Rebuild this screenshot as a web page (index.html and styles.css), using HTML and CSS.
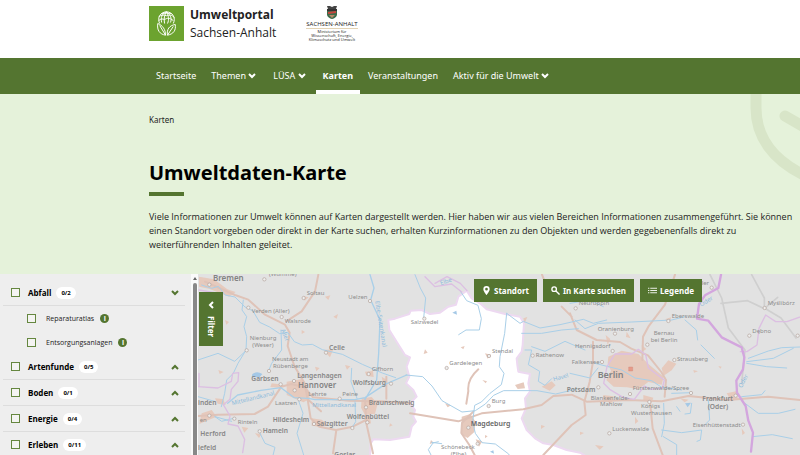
FILE: index.html
```
<!DOCTYPE html>
<html lang="de">
<head>
    <title>Umweltdaten-Karte</title>
    <meta charset="UTF-8">
    <link rel="stylesheet" href="styles.css">
</head>
<body>
    <header class="header">
        <a class="brand" href="#">
            <svg class="brand-logo" viewBox="0 0 36 36" fill="none" stroke="#fff" stroke-width="1">
                <rect width="36" height="36" fill="#6ca32f" stroke="none"/>
                <path d="M11 18C8 12 12 6 18 6s10 6 7 12M10 15c2-2 4-2 6-1 3-2 5-2 9 1M10 11c3-2 5-2 8-1 3-1 6-1 8 2M13 8c3-1 7-1 10 0M13 17c-1-5 0-9 5-11 4 3 6 7 4 11M16 18c-1-5 0-9 2-12 2 4 3 8 1 12" />
                <path d="M17 30c0-6-3-10-8-12-1 7 2 11 8 12zM19 30c-1-6 2-10 8-11 1 6-2 10-8 11zM11 20l6 10M25 21l-6 9"/>
            </svg>
            <span class="brand-name"><b>Umweltportal</b><br>Sachsen-Anhalt</span>
        </a>
        <div class="ministry">
            <svg class="crest" viewBox="0 0 12 13">
                <path d="M1 0h3l2 1 2-1h3l-1 3H2z" fill="#444"/>
                <path d="M1 3h10v6q-1 3-5 4-4-1-5-4z" fill="#3c6b4a"/>
                <path d="M1 3h10v2H1z" fill="#333"/>
                <path d="M2 6l8-1v2L2 8z" fill="#c8443c"/>
                <path d="M3 9h6l-3 3z" fill="#b98a68"/>
            </svg>
            <span class="ministry-land">SACHSEN-ANHALT</span>
            <span class="ministry-name">Ministerium für<br>Wissenschaft, Energie,<br>Klimaschutz und Umwelt</span>
        </div>
    </header>

    <nav class="nav">
        <a class="nav-item" href="#">Startseite</a>
        <button class="nav-item nav-drop" type="button">Themen <svg class="chevron" viewBox="0 0 8 6"><path d="M1 1l3 3 3-3"/></svg></button>
        <button class="nav-item nav-drop" type="button">LÜSA <svg class="chevron" viewBox="0 0 8 6"><path d="M1 1l3 3 3-3"/></svg></button>
        <a class="nav-item active" href="#">Karten</a>
        <a class="nav-item" href="#">Veranstaltungen</a>
        <button class="nav-item nav-drop" type="button">Aktiv für die Umwelt <svg class="chevron" viewBox="0 0 8 6"><path d="M1 1l3 3 3-3"/></svg></button>
    </nav>

    <section class="hero">
        <svg class="hero-leaf" viewBox="0 0 50 90">
            <path d="M6 -2V14C6 42 22 66 56 82M35 22L56 34"/>
        </svg>
        <div class="breadcrumb">Karten</div>
        <h1>Umweltdaten-Karte</h1>
        <p>Viele Informationen zur Umwelt können auf Karten dargestellt werden. Hier haben wir aus vielen Bereichen Informationen zusammengeführt. Sie können einen Standort vorgeben oder direkt in der Karte suchen, erhalten Kurzinformationen zu den Objekten und werden gegebenenfalls direkt zu weiterführenden Inhalten geleitet.</p>
    </section>

    <main class="map-section">
        <aside class="filter">
            <div class="filter-list">
                <div class="group">
                    <input type="checkbox" id="abfall"><label for="abfall">Abfall</label><span class="count">0/2</span>
                    <button class="toggle" type="button" aria-label="Abfall"><svg class="chevron" viewBox="0 0 8 6"><path d="M1 1l3 3 3-3"/></svg></button>
                </div>
                <div class="layer">
                    <input type="checkbox" id="reparatur"><label for="reparatur">Reparaturatlas</label><span class="info">i</span>
                </div>
                <div class="layer">
                    <input type="checkbox" id="entsorgung"><label for="entsorgung">Entsorgungsanlagen</label><span class="info">i</span>
                </div>
                <div class="group">
                    <input type="checkbox" id="arten"><label for="arten">Artenfunde</label><span class="count">0/5</span>
                    <button class="toggle" type="button" aria-label="Artenfunde"><svg class="chevron" viewBox="0 0 8 6"><path d="M1 5l3-3 3 3"/></svg></button>
                </div>
                <div class="group">
                    <input type="checkbox" id="boden"><label for="boden">Boden</label><span class="count">0/1</span>
                    <button class="toggle" type="button" aria-label="Boden"><svg class="chevron" viewBox="0 0 8 6"><path d="M1 5l3-3 3 3"/></svg></button>
                </div>
                <div class="group">
                    <input type="checkbox" id="energie"><label for="energie">Energie</label><span class="count">0/4</span>
                    <button class="toggle" type="button" aria-label="Energie"><svg class="chevron" viewBox="0 0 8 6"><path d="M1 5l3-3 3 3"/></svg></button>
                </div>
                <div class="group">
                    <input type="checkbox" id="erleben"><label for="erleben">Erleben</label><span class="count">0/11</span>
                    <button class="toggle" type="button" aria-label="Erleben"><svg class="chevron" viewBox="0 0 8 6"><path d="M1 5l3-3 3 3"/></svg></button>
                </div>
            </div>
            <div class="scrollbar"><i class="scroll-arrow"></i><i class="scroll-thumb"></i></div>
        </aside>

        <div class="map">
            <svg class="map-canvas" viewBox="9 12 1806 543" preserveAspectRatio="xMinYMin slice">
                <!-- Sachsen-Anhalt -->
                <path class="land" d="M815 62L790 80 783 104 760 110 735 128 705 132 680 120 647 122 643 132 600 146 580 150 583 180 605 215 630 255 645 262 635 290 643 320 633 340 655 360 665 380 645 400 660 420 655 440 663 455 650 470 643 500 585 510 535 508 527 520 525 560H1175L1155 548 1115 540 1075 525 1045 520 1020 505 995 480 980 445 993 415 990 385 1005 365 1000 340 1005 312 970 305 967 285 965 265 980 245 983 225 985 190 987 160 975 140 930 132 875 118 855 100 830 85z"/>

                <g class="urban">
                    <path d="M12 20l45 8 40 30 25 8-20 14-60-24-30-6zM275 335l45-8 15 20 10 40-20 10-50-22zM20 430l30-10 15 20-30 12-22 10zM500 385l30-4 18 20-8 30-30 4-12-22zM350 445l30 4 16 14-16 8-30-4zM230 340l40 5-14 8-30-2zM60 385l24 2 8 18-24-4zM506 440l18-4 4 24-14 4zM325 78l16 4-12 10zM90 150l12 6-8 8zM385 240l30-2-10 24zM390 80l16-4-6 14zM415 140l14-8-4 14zM360 290l14 4-10 10zM510 305l24-2 2 18-22-4zM140 470l20 4-12 14zM70 300l16 6-12 6zM450 285l16 4-10 10zM320 180l10 6-10 6zM180 490l20 2-8 12zM560 320l16 10-12 8z"/>
                    <path d="M800 440l26-8 16 24-4 30-20 18-18-10zM690 238l8 10-12 4zM797 232l12-4-4 10zM870 250l18 4-10 12zM862 330l14 4-4 6zM960 345l26-8 4 18-22 2zM750 400l18 6-10 6zM708 510l8 8-12 4zM985 145l12-4-8 18zM1040 350l30-16 12 12-18 16zM1038 465l12 4-12 8zM870 495l8 4-8 6zM842 508l20 6-10 16zM585 460l8 6-10 4z"/>
                    <path d="M1240 260l40-18 50 10 30 30 46 38-6 24-40-8-30 22-34-6-40-2-22-20 14-28-10-22zM1400 295l20-24 24 10-14 20-24 16zM1225 375l30 4-6 22-24-14zM1345 375l30 8-6 16-24-8zM1595 370l28-6 6 22-20 8zM1410 148l18-6-2 14zM1495 300l14 4-12 4zM1570 288l10 2-4 6zM1200 525l26 4-12 10zM1320 440l10 14-10 8zM1155 485l12 4-12 6zM1295 185l12 20-14-4zM1340 225l14 12-12 8zM1455 385l26 4-12 8zM1640 475l10 14-8 6zM1232 195l14 12-8 18z"/>
                </g>

                <g class="road">
                    <path d="M30 35l90 40 40 14 50 45 60 30 14 24-6 40 20 60 30 50 10 50 40 36M370 14l-10 50-40 60-46 30M9 438l60-4 110-2 40-22 40-60 30-8 40 10 25 30 110 10 92 2 90 6M510 390l4 70 20 90M574 320v66M335 370l12 75 26 25 50 10 50-10 40-20M424 480l-10 70"/>
                    <path d="M645 430L790 454 832 440 860 430 985 418 1040 405 1075 378 1130 374 1175 395 1300 390 1400 394 1480 378 1600 390 1720 380 1815 390"/>
                    <path d="M850 298q-34 30-30 65l-6 38M835 425l-34 34-2 30 24 36 16 30M1125 130l20 50 60 30 70 6 34 20 50 20 40 50 14 24-4 50M1440 14l-30 90-50 66-16 30-2 70M1365 395l8 80 30 80M1045 555l85-90 42-30-4-40 16-60 10-60 0-60M1100 110l30 30M1041 14l8 20"/>
                </g>
                <path class="road-grey" d="M1545 14l35 70 20 90 30 40 20 26M1578 100l80-8 50 24 40-34M1670 14l38 70 0 30 50 30 45 60M1650 240l-10 100"/>

                <g class="river">
                    <path d="M20 45l30 10 20-6 20 26 30 6 30 30 24 12 20 34 30 14 30 20 24-4 20 28 24 10 30-2 30 16 60 14 60 30 60 26 40 14M145 90l-4 30 14 20-8 30 8 30-2 40-24 40-14 30-20 20-6 40-10 40M258 180l2 60-30 40-8 20M9 270l60-20 50 24 36-34M470 295l-2 40 18 50M190 480l20 40 30 12-6 24M310 390l14 40-18 60 20 65M480 395l2 60-12 20M60 440l50 14M60 440l20 14 40-10M9 380l50 14"/>
                    <path d="M660 14l16 40 16 30-6 60M795 62l20 30 34 14 10 40-6 34-40 0-22 14M935 130l-6 60-14 70-2 30 14 20-8 34-34 26-26 26-20 10-6 50 8 34 20 28 40 4 40 30 10 20M935 130l40 30 10-6 50 20 60-10 70-16 30 12 40-10M990 240h20l-10 44 34 20-4 30 20 12 20-20M980 190l60 0 60-10 50-4M1010 230l40 14 60-30 60 26M730 515l-16 4-14 20 10 20M710 517l30 4M633 315l50 5 28 28 30 44 60 34 40-4 30-20 25-26 30-14 100 0 56 10 60-14"/>
                </g>
                <g class="canal">
                    <path d="M525 14l12 40-10 36 28 60-4 100-6 80-35 58M98 400l30-25 70-14 60-8 40 30 40 2M340 385l20 4h120l30-6 60-40 65-28"/>
                </g>
                <g class="river">
                    <path d="M1140 150l30 26 40-16 100-4 120-6 40-10M1125 310l60 14 24-30M1240 290l40 10 40 24 50 8 30 20 60 8M1240 290l-40-10M1430 370l60-2M1470 150l34 30 4 30M1518 225l40 40M1660 265l60-22 40-10 55-2M1655 275l80-10 60-30M1655 280l60 10 60 4M1640 380l60-6 10-12M1650 400l40 30 60 0 50-12M1672 500l60-6 60 12M1400 480l60 8 60-8-4 30-10 4M1540 390l4 60-14 14M1405 500l40 24 0 31M1406 400l2 60-8 40M1125 100l60-10 40 20M1445 410l10 14M1490 400l-4 30-16 2"/>
                </g>

                <path class="border" d="M9 350l60 4 40-20 4-24 18-2-2 26-20 24-4 30-20 16 20 34-6 24 30 6 20 40-6 40M12 350v-40M12 60l60 10M800 66l-30-24-50 8-30-30M720 40l36-20 40 20 20 22"/>
                <path class="border" d="M1226 340l10-50 24-38 50 0 20-14 22 16 8 40 48 36-6 24-34 4-20-10-30 40-34-6-40-24zM1636 245l20 0 30-20 6-50 20-40 30 20 34 0 55-20"/>
                <path class="oder" d="M1578 14l-8 40-40 22-18 26-6 44 34 6 40 50 60 30 8 30-4 36-20 34 2 36 26 40 8 44 14 36-6 57"/>

                <g class="lake">
                    <path d="M172 312q14-10 30 0l-8 10-24 0zM772 128l12-6 2 12zM885 545l10-4 2 10zM1470 400l18-2-10 14z"/>
                </g>

                <g class="town-dot">
                    <circle cx="43" cy="44" r="5"/><circle cx="208" cy="28" r="5"/><circle cx="326" cy="84" r="5"/><circle cx="160" cy="113" r="5"/><circle cx="260" cy="141" r="5"/><circle cx="525" cy="93" r="5"/><circle cx="155" cy="241" r="5"/><circle cx="393" cy="248" r="5"/><circle cx="222" cy="303" r="5"/><circle cx="521" cy="312" r="5"/><circle cx="257" cy="343" r="5"/><circle cx="297" cy="333" r="5"/><circle cx="299" cy="361" r="5"/><circle cx="588" cy="341" r="5"/><circle cx="434" cy="386" r="5"/><circle cx="313" cy="388" r="5"/><circle cx="513" cy="412" r="5"/><circle cx="43" cy="437" r="5"/><circle cx="118" cy="446" r="5"/><circle cx="194" cy="484" r="5"/><circle cx="357" cy="462" r="5"/><circle cx="472" cy="474" r="5"/><circle cx="517" cy="457" r="5"/>
                    <circle cx="688" cy="146" r="5"/><circle cx="882" cy="258" r="5"/><circle cx="755" cy="294" r="5"/><circle cx="881" cy="408" r="5"/><circle cx="820" cy="473" r="5"/><circle cx="848" cy="521" r="5"/><circle cx="1013" cy="257" r="5"/>
                    <circle cx="1142" cy="115" r="5"/><circle cx="1420" cy="153" r="5"/><circle cx="1260" cy="191" r="5"/><circle cx="1357" cy="224" r="5"/><circle cx="1253" cy="243" r="5"/><circle cx="1221" cy="276" r="5"/><circle cx="1438" cy="270" r="5"/><circle cx="1210" cy="352" r="5"/><circle cx="1305" cy="372" r="5"/><circle cx="1363" cy="396" r="5"/><circle cx="1488" cy="369" r="5"/><circle cx="1622" cy="377" r="5"/><circle cx="1644" cy="464" r="5"/><circle cx="1243" cy="490" r="5"/><circle cx="1550" cy="53" r="5"/><circle cx="1709" cy="114" r="5"/><circle cx="1663" cy="197" r="5"/><circle cx="1808" cy="197" r="5"/>
                </g>
                <path d="M1301 291h12v12h-12z" fill="#e79b89" stroke="#c98476"/>

                <g class="water-name">
                    <text transform="translate(112 406) rotate(-14)">Mittellandkanal</text>
                    <text x="352" y="411">Mittellandkanal</text>
                    <text transform="translate(541 94) rotate(81)">Elbe-Seitenkanal</text>
                    <text transform="translate(257 180) rotate(66)">Aller</text>
                    <text transform="translate(1076 334) rotate(-16)">Havel</text>
                    <text transform="translate(1519 110) rotate(-32)">Oder</text>
                    <text transform="translate(1640 355) rotate(-62)">Oder</text>
                    <text transform="translate(738 46) rotate(-20)">Elbe</text>
                </g>
                <g class="town">
                    <text x="222" y="19">(Wümme)</text>
                    <text x="335" y="76">Soltau</text>
                    <text x="460" y="86">Uelzen</text>
                    <text x="170" y="130">Verden (Aller)</text>
                    <text x="269" y="159">Walsrode</text>
                    <text x="164" y="211">Nienburg</text>
                    <text x="172" y="232">(Weser)</text>
                    <text x="231" y="272">Neustadt am</text>
                    <text x="234" y="294">Rübenberge</text>
                    <text x="530" y="304">Gifhorn</text>
                    <text x="340" y="379">Lehrte</text>
                    <text x="442" y="377">Peine</text>
                    <text x="240" y="406">Laatzen</text>
                    <text x="128" y="463">Rinteln</text>
                    <text x="14" y="456">en</text>
                    <text x="647" y="162">Salzwedel</text>
                    <text x="891" y="249">Stendal</text>
                    <text x="763" y="286">Gardelegen</text>
                    <text x="890" y="400">Burg</text>
                    <text x="738" y="538">Schönebeck</text>
                    <text x="767" y="559">(Elbe)</text>
                    <text x="1022" y="262">Rathenow</text>
                    <text x="1151" y="105">Neuruppin</text>
                    <text x="1430" y="145">Eberswalde</text>
                    <text x="1208" y="182">Oranienburg</text>
                    <text x="1376" y="194">Bernau</text>
                    <text x="1367" y="216">bei Berlin</text>
                    <text x="1140" y="234">Hennigsdorf</text>
                    <text x="1130" y="281">Falkensee</text>
                    <text x="1446" y="274">Strausberg</text>
                    <text x="1313" y="361">Fürstenwalde/Spree</text>
                    <text x="1187" y="389">Blankenfelde-</text>
                    <text x="1215" y="409">Mahlow</text>
                    <text x="1338" y="413">Königs</text>
                    <text x="1308" y="435">Wusterhausen</text>
                    <text x="1252" y="482">Luckenwalde</text>
                    <text x="1493" y="470">Eisenhüttenstadt</text>
                    <text x="1718" y="105">Myślibórz</text>
                    <text x="1672" y="189">Dębno</text>
                    <text x="1520" y="45">ler</text>
                </g>
                <g class="city">
                    <text x="402" y="239">Celle</text>
                    <text x="307" y="324">Langenhagen</text>
                    <text x="169" y="334">Garbsen</text>
                    <text x="473" y="346">Wolfsburg</text>
                    <text x="9" y="406">inden</text>
                    <text x="521" y="406">Braunschweig</text>
                    <text x="455" y="448">Wolfenbüttel</text>
                    <text x="233" y="456">Hildesheim</text>
                    <text x="365" y="467">Salzgitter</text>
                    <text x="203" y="489">Hameln</text>
                    <text x="16" y="497">Herford</text>
                    <text x="9" y="541">lefeld</text>
                    <text x="418" y="562">Goslar</text>
                    <text x="1115" y="366">Potsdam</text>
                    <text x="1522" y="392">Frankfurt</text>
                    <text x="1538" y="416">(Oder)</text>
                </g>
                <g class="metro">
                    <text x="54" y="34">Bremen</text>
                    <text x="309" y="353">Hannover</text>
                    <text class="dark" x="827" y="469">Magdeburg</text>
                    <text class="capital" x="1208" y="325">Berlin</text>
                </g>
            </svg>

            <button class="filter-tab" type="button">
                <svg class="chevron" viewBox="0 0 8 6"><path d="M1 1l3 3 3-3"/></svg>
                Filter
            </button>
            <div class="map-tools">
                <button class="map-button" type="button">
                    <svg class="icon" viewBox="0 0 20 20"><path d="M10 0a7 7 0 0 0-7 7C3 12 10 20 10 20s7-8 7-13A7 7 0 0 0 10 0zm0 4a3 3 0 1 1 0 6 3 3 0 0 1 0-6z" fill="#fff"/></svg>
                    Standort
                </button>
                <button class="map-button" type="button">
                    <svg class="icon" viewBox="0 0 20 20" fill="none" stroke="#fff" stroke-width="3"><circle cx="7" cy="7" r="5"/><path d="M11 11l8 8"/></svg>
                    In Karte suchen
                </button>
                <button class="map-button" type="button">
                    <svg class="icon" viewBox="0 0 20 20" stroke="#fff" stroke-width="2"><path d="M0 5h3M5 5h15M0 10h3M5 10h15M0 15h3M5 15h15"/></svg>
                    Legende
                </button>
            </div>
        </div>
    </main>
</body>
</html>
```
FILE: styles.css
```
* {
    box-sizing: border-box;
}
body {
    margin: 0;
    height: 100vh;
    display: flex;
    flex-direction: column;
    font-family: "Noto Sans", "Open Sans", sans-serif;
    font-size: 9px;
    color: #222;
    background-color: #fff;
}
button {
    border: none;
    padding: 0;
    font-family: inherit;
    font-size: inherit;
    color: inherit;
    background: none;
    cursor: pointer;
}
.header {
    display: flex;
    align-items: flex-start;
    gap: 30px;
    height: 58px;
    padding: 6px 0 0 149px;
    flex-shrink: 0;
    font-family: "Open Sans", sans-serif;
}
.brand {
    display: flex;
    gap: 6px;
    color: #222;
    text-decoration: none;
}
.brand-logo {
    width: 35px;
    height: 35px;
}
.brand-name {
    font-size: 12px;
    line-height: 18px;
}
.ministry {
    display: flex;
    flex-direction: column;
    align-items: center;
    text-align: center;
}
.crest {
    width: 12px;
    height: 13px;
    margin-bottom: 1px;
}
.ministry-land {
    font-size: 6px;
    line-height: 8px;
    border-bottom: 1px solid #e3d3b4;
}
.ministry-name {
    margin-top: 1px;
    font-size: 4px;
    line-height: 4px;
}

.nav {
    display: flex;
    flex-shrink: 0;
    gap: 1px;
    height: 36px;
    padding-left: 149px;
    background-color: #547530;
    color: #fff;
}
.nav-item {
    padding: 0 7px;
    line-height: 36px;
    color: #fff;
    text-decoration: none;
    white-space: nowrap;
}
.nav-drop {
    margin-right: 2px;
}
.nav-item.active {
    font-weight: bold;
    border-bottom: 4px solid #fff;
}
.chevron {
    width: 8px;
    height: 6px;
    fill: none;
    stroke: currentColor;
    stroke-width: 2;
}

.hero {
    position: relative;
    flex-shrink: 0;
    padding: 20px 0 22px 149px;
    background-color: #e5f2da;
}
.hero-leaf {
    position: absolute;
    top: 0;
    right: 0;
    width: 50px;
    height: 90px;
    fill: none;
    stroke: #d8e5c8;
    stroke-width: 11;
    stroke-linecap: round;
}
.breadcrumb {
    font-size: 8px;
    line-height: 12px;
}
.hero h1 {
    margin: 32px 0 0;
    font-size: 20px;
    line-height: 30px;
    color: #000;
}
.hero h1::after {
    content: "";
    display: block;
    width: 35px;
    height: 4px;
    margin-top: 4px;
    background-color: #547530;
}
.hero p {
    margin: 14px 0 0;
    font-family: "Open Sans", sans-serif;
    line-height: 14px;
}

.map-section {
    display: flex;
    flex: 1;
    min-height: 0;
}
.filter {
    display: flex;
    width: 198px;
    flex-shrink: 0;
    font-family: "Open Sans", sans-serif;
    background-color: #eee;
    overflow: hidden;
}
.filter-list {
    flex: 1;
    padding: 6px 6px 0 3px;
}
.group,
.layer {
    display: flex;
    align-items: center;
    padding-left: 8px;
}
.group {
    height: 26px;
    border-bottom: 1px solid #ddd;
    font-size: 8px;
    font-weight: bold;
    color: #000;
}
.layer {
    height: 24px;
    padding-left: 24px;
    font-size: 7px;
}
.filter input {
    appearance: none;
    width: 9px;
    height: 9px;
    margin: 0 8px 0 0;
    border: 1px solid #65873f;
    background-color: #f4f4f2;
}
.layer input {
    margin-right: 10px;
}
.count {
    margin-left: 5px;
    padding: 0 5px;
    border-radius: 6px;
    background-color: #fff;
    font-size: 6px;
    line-height: 12px;
}
.toggle {
    margin-left: auto;
    margin-right: 6px;
    color: #547530;
    line-height: 6px;
}
.info {
    width: 9px;
    margin-left: 6px;
    border-radius: 50%;
    background-color: #547530;
    color: #fff;
    font-size: 7px;
    font-weight: bold;
    line-height: 9px;
    text-align: center;
}
.scrollbar {
    display: flex;
    flex-direction: column;
    align-items: center;
    width: 7px;
    padding-top: 3px;
    background-color: #fafafa;
}
.scroll-arrow {
    border: 2px solid transparent;
    border-top: none;
    border-bottom: 3px solid #666;
}
.scroll-thumb {
    flex: 1;
    width: 4px;
    margin-top: 3px;
    border-radius: 2px 2px 0 0;
    background-color: #888;
}

.map {
    position: relative;
    flex: 1;
    min-width: 0;
    overflow: hidden;
    background-color: #e2e2e2;
}
.map-canvas {
    display: block;
    width: 100%;
    height: 100%;
}
.land {
    fill: #fff;
    stroke: #edd9f1;
    stroke-width: 6;
    stroke-linejoin: round;
}
.urban {
    fill: #e6cabd;
}
.road,
.road-grey,
.river,
.canal,
.border,
.oder {
    fill: none;
    stroke-linejoin: round;
    stroke-linecap: round;
}
.road {
    stroke: #dfc3b8;
    stroke-width: 6;
}
.road-grey {
    stroke: #cfcfcf;
    stroke-width: 5;
}
.river {
    stroke: #a9cfe8;
    stroke-width: 3;
}
.canal {
    stroke: #a9cfe8;
    stroke-width: 4;
}
.border {
    stroke: #dcbfe2;
    stroke-width: 4;
}
.oder {
    stroke: #d3a6de;
    stroke-width: 7;
}
.lake {
    fill: #a4c8e6;
}
.town-dot {
    fill: #eee;
    stroke: #b3a39c;
    stroke-width: 2;
}
.water-name {
    fill: #8dbbdc;
    font-size: 18px;
}
.town {
    fill: #8c8c8c;
    font-size: 18px;
}
.city {
    fill: #868686;
    font-size: 20px;
    font-weight: 600;
}
.metro {
    fill: #828282;
    font-size: 24px;
    font-weight: 600;
}
.metro .dark {
    fill: #666;
    font-size: 21px;
}
.metro .capital {
    font-size: 27px;
}

.filter-tab {
    position: absolute;
    top: 18px;
    left: 1px;
    display: flex;
    align-items: center;
    justify-content: center;
    gap: 8px;
    width: 24px;
    height: 54px;
    background-color: #547530;
    color: #fff;
    font-size: 8px;
    font-weight: bold;
    writing-mode: vertical-rl;
}
.filter-tab .chevron {
    transform: rotate(90deg);
}
.map-tools {
    position: absolute;
    top: 5px;
    right: 98px;
    display: flex;
    gap: 6px;
}
.map-button {
    display: flex;
    align-items: center;
    gap: 3px;
    height: 23px;
    padding: 0 8px;
    background-color: #547530;
    color: #fff;
    font-size: 8px;
    font-weight: bold;
    white-space: nowrap;
}
.icon {
    width: 9px;
    height: 9px;
}
```
